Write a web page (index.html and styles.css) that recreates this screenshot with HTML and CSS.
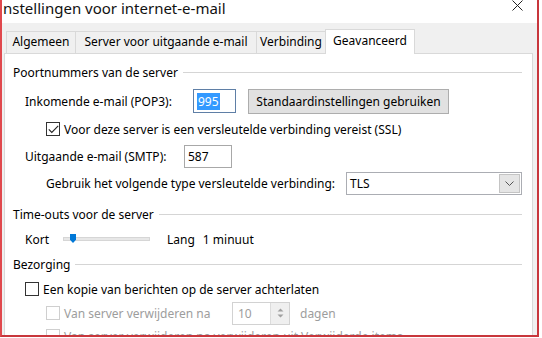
FILE: index.html
```html
<!DOCTYPE html>
<html lang="nl">
<head>
    <meta charset="UTF-8">
    <title>Instellingen voor internet-e-mail</title>
    <link rel="stylesheet" href="styles.css">
</head>
<body>
    <div class="window">
        <div class="titlebar">
            <span class="title">nstellingen voor internet-e-mail</span>
            <svg class="close" width="11" height="11" viewBox="0 0 11 11">
                <path d="M0.5 0.5 L10.5 10.5 M10.5 0.5 L0.5 10.5" stroke="#222" stroke-width="1" fill="none"/>
            </svg>
        </div>

        <div class="dialog">
            <div class="tabs">
                <div class="tab tab-gen">Algemeen</div>
                <div class="tab tab-out">Server voor uitgaande e-mail</div>
                <div class="tab tab-con">Verbinding</div>
                <div class="tab tab-adv active">Geavanceerd</div>
            </div>

            <div class="panel">
                <div class="group-head">
                    <span>Poortnummers van de server</span>
                    <span class="rule"></span>
                </div>

                <div class="row row-pop">
                    <span class="lbl lbl-in">Inkomende e-mail (POP3):</span>
                    <div class="field field-in"><span class="sel">995</span></div>
                    <button class="btn">Standaardinstellingen gebruiken</button>
                </div>

                <div class="row row-ssl">
                    <span class="check checked">
                        <svg width="11" height="9" viewBox="0 0 11 9"><path d="M0.8 4.3 L3.8 7.5 L10.2 0.8" stroke="#222" stroke-width="1.1" fill="none"/></svg>
                    </span>
                    <span>Voor deze server is een versleutelde verbinding vereist (SSL)</span>
                </div>

                <div class="row row-smtp">
                    <span class="lbl lbl-out">Uitgaande e-mail (SMTP):</span>
                    <div class="field field-out">587</div>
                </div>

                <div class="row row-enc">
                    <span class="lbl lbl-enc">Gebruik het volgende type versleutelde verbinding:</span>
                    <div class="select">
                        <span>TLS</span>
                        <span class="drop">
                            <svg width="9" height="5" viewBox="0 0 9 5"><path d="M0.5 0.5 L4.5 4.5 L8.5 0.5" stroke="#555" stroke-width="1" fill="none"/></svg>
                        </span>
                    </div>
                </div>

                <div class="group-head head-time">
                    <span>Time-outs voor de server</span>
                    <span class="rule"></span>
                </div>

                <div class="row row-slider">
                    <span class="lbl lbl-kort">Kort</span>
                    <div class="track"><span class="thumb"></span></div>
                    <span class="lang">Lang</span>
                    <span>1 minuut</span>
                </div>

                <div class="group-head head-del">
                    <span>Bezorging</span>
                    <span class="rule"></span>
                </div>

                <div class="row row-copy">
                    <span class="check"></span>
                    <span>Een kopie van berichten op de server achterlaten</span>
                </div>

                <div class="row row-days disabled">
                    <span class="check"></span>
                    <span class="lbl lbl-days">Van server verwijderen na</span>
                    <div class="spin">
                        <span>10</span>
                        <span class="spin-btn">
                            <svg width="7" height="12" viewBox="0 0 7 12"><path d="M0.5 4.5 L3.5 1.5 L6.5 4.5 Z M0.5 7.5 L3.5 10.5 L6.5 7.5 Z" fill="#a0a0a0"/></svg>
                        </span>
                    </div>
                    <span class="days">dagen</span>
                </div>

                <div class="row row-last disabled">
                    <span class="check"></span>
                    <span>Van server verwijderen na verwijderen uit Verwijderde items</span>
                </div>
            </div>
        </div>
    </div>
</body>
</html>
```

FILE: styles.css
```css
* {
    box-sizing: border-box;
    margin: 0;
    padding: 0;
}

html, body {
    width: 542px;
    height: 338px;
    overflow: hidden;
    background: #fff;
}

body {
    font-family: 'Noto Sans', 'Liberation Sans', sans-serif;
    font-size: 12px;
    color: #000;
}

.window {
    width: 539px;
    height: 337px;
    border-left: 2px solid #e0484d;
    border-right: 2px solid #c8363c;
    border-bottom: 2px solid #c8363c;
    overflow: hidden;
    background: #f0f0f0;
}

.titlebar {
    height: 23px;
    background: #fff;
    position: relative;
    padding-left: 1px;
}

.title {
    font-size: 15px;
    line-height: 16px;
    display: block;
    color: #111;
}

.close {
    position: absolute;
    left: 510px;
    top: 0;
}

.dialog {
    padding: 5px 4px 0 2px;
}

/* Tabs */
.tabs {
    display: flex;
    align-items: flex-end;
    height: 25px;
    padding-left: 2px;
}

.tab {
    height: 22px;
    line-height: 20px;
    text-align: center;
    border: 1px solid #d9d9d9;
    border-right: none;
    border-bottom: none;
    background: #f0f0f0;
    white-space: nowrap;
}

.tab-gen { width: 69px; }
.tab-out { width: 181px; }
.tab-con { width: 70px; border-right: 1px solid #d9d9d9; }

.tab.active {
    width: 90px;
    height: 25px;
    line-height: 22px;
    background: #fff;
    border: 1px solid #d9d9d9;
    border-bottom: none;
    margin-left: -1px;
    position: relative;
    top: 1px;
}

.panel {
    background: #fff;
    border: 1px solid #d9d9d9;
    height: 300px;
    padding: 0 10px 0 8px;
}

/* Group headers */
.group-head {
    display: flex;
    align-items: center;
    height: 20px;
    margin-top: 8px;
}

.rule {
    flex: 1;
    height: 1px;
    background: #d5d5d5;
    margin-left: 5px;
}

.head-time { margin-top: 9px; }
.head-del { margin-top: 5px; }

/* Rows */
.row {
    display: flex;
    align-items: center;
    padding-left: 12px;
}

.row-pop { height: 26px; margin-top: 6px; }
.row-ssl { height: 20px; margin-top: 5px; padding-left: 33px; }
.row-smtp { height: 24px; margin-top: 5px; }
.row-enc { height: 24px; margin-top: 3px; padding-left: 33px; }
.row-slider { height: 20px; margin-top: 5px; }
.row-copy { height: 20px; margin-top: 5px; }
.row-days { height: 24px; margin-top: 2px; padding-left: 33px; }
.row-last { height: 20px; margin-top: 1px; padding-left: 33px; }

.lbl { flex: none; }
.lbl-in { width: 168px; }
.lbl-out { width: 159px; }
.lbl-enc { width: 300px; }
.lbl-kort { width: 38px; }
.lbl-days { width: 168px; }

/* Inputs */
.field {
    height: 24px;
    border: 1px solid #a8a8a8;
    padding: 0 3px;
    display: flex;
    align-items: center;
}

.field-in {
    width: 43px;
    border-color: #5f7fa6;
}

.field-out {
    width: 48px;
    height: 23px;
}

.sel {
    background: #3399ff;
    color: #fff;
    padding: 0 1px;
    line-height: 17px;
}

.btn {
    font: inherit;
    height: 25px;
    width: 201px;
    margin-left: 12px;
    background: #e1e1e1;
    border: 1px solid #adadad;
    color: #000;
}

.check {
    flex: none;
    width: 14px;
    height: 14px;
    border: 1px solid #333;
    margin-right: 4px;
    display: flex;
    align-items: center;
    justify-content: center;
    background: #fff;
}

.select {
    width: 177px;
    height: 23px;
    border: 1px solid #abadb3;
    display: flex;
    align-items: center;
    justify-content: space-between;
    padding-left: 3px;
}

.drop {
    width: 21px;
    height: 19px;
    margin-right: 1px;
    background: #e5e5e5;
    border: 1px solid #c4c4c4;
    display: flex;
    align-items: center;
    justify-content: center;
}

/* Slider */
.track {
    position: relative;
    width: 87px;
    height: 4px;
    background: #e7e7e7;
    border: 1px solid #d6d6d6;
}

.thumb {
    position: absolute;
    left: 6px;
    top: -4px;
    width: 6px;
    height: 9px;
    background: #0078d7;
    clip-path: polygon(0 0, 100% 0, 100% 65%, 50% 100%, 0 65%);
}

.lang {
    margin-left: 17px;
    margin-right: 8px;
}

/* Disabled rows */
.disabled {
    color: #9d9d9d;
}

.disabled .check {
    border-color: #cfcfcf;
}

.spin {
    width: 58px;
    height: 23px;
    border: 1px solid #d2d2d2;
    display: flex;
    align-items: center;
    justify-content: space-between;
    padding-left: 5px;
}

.spin-btn {
    width: 19px;
    height: 21px;
    background: #efefef;
    border-left: 1px solid #dcdcdc;
    display: flex;
    align-items: center;
    justify-content: center;
}

.days {
    margin-left: 10px;
}
```
